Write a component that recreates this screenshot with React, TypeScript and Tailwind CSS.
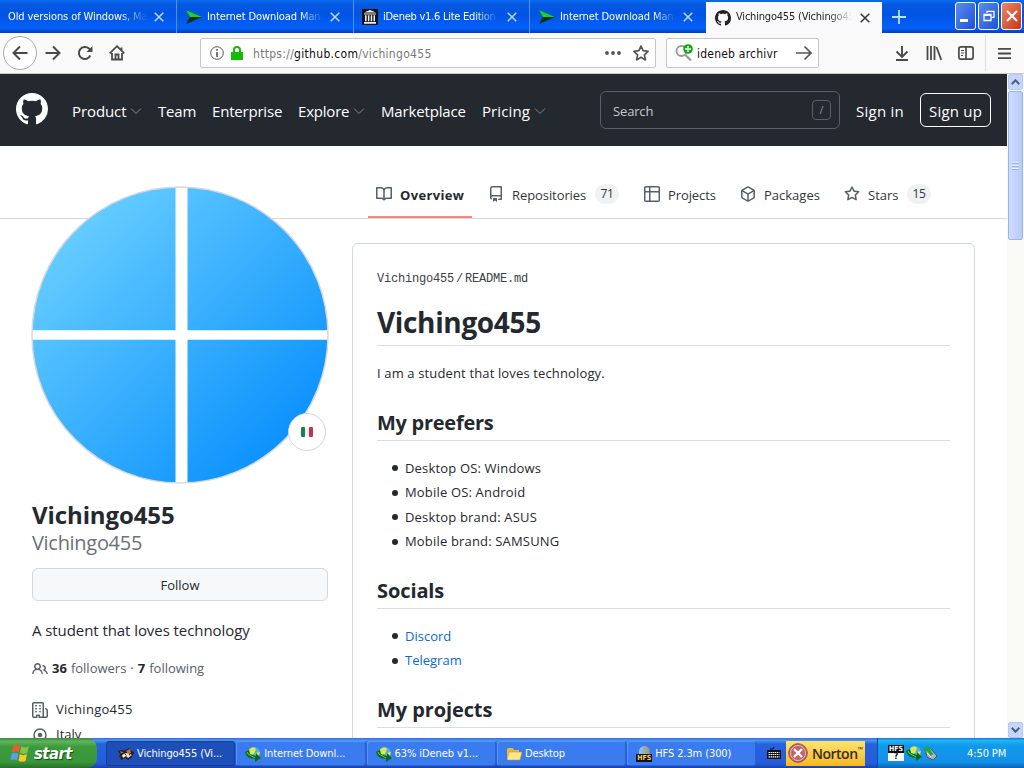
import React from 'react';

const paths = {
  github:
    'M8 0C3.58 0 0 3.58 0 8c0 3.54 2.29 6.53 5.47 7.59.4.07.55-.17.55-.38 0-.19-.01-.82-.01-1.49-2.01.37-2.53-.49-2.69-.94-.09-.23-.48-.94-.82-1.13-.28-.15-.68-.52-.01-.53.63-.01 1.08.58 1.23.82.72 1.21 1.87.87 2.33.66.07-.52.28-.87.51-1.07-1.78-.2-3.64-.89-3.64-3.95 0-.87.31-1.59.82-2.15-.08-.2-.36-1.02.08-2.12 0 0 .67-.21 2.2.82.64-.18 1.32-.27 2-.27.68 0 1.36.09 2 .27 1.53-1.04 2.2-.82 2.2-.82.44 1.1.16 1.92.08 2.12.51.56.82 1.27.82 2.15 0 3.07-1.87 3.75-3.65 3.95.29.25.54.73.54 1.48 0 1.07-.01 1.93-.01 2.2 0 .21.15.46.55.38A8.013 8.013 0 0016 8c0-4.42-3.58-8-8-8z',
  book: 'M0 1.75A.75.75 0 01.75 1h4.253c1.227 0 2.317.59 3 1.501A3.744 3.744 0 0111.006 1h4.245a.75.75 0 01.75.75v10.5a.75.75 0 01-.75.75h-4.507a2.25 2.25 0 00-1.591.659l-.622.621a.75.75 0 01-1.06 0l-.622-.621A2.25 2.25 0 005.258 13H.75a.75.75 0 01-.75-.75V1.75zm8.755 3a2.25 2.25 0 012.25-2.25H14.5v9h-3.757c-.71 0-1.4.201-1.992.572l.004-7.322zm-1.504 7.324l.004-5.073-.002-2.253A2.25 2.25 0 005.003 2.5H1.5v9h3.757a3.75 3.75 0 011.994.574z',
  repo: 'M2 2.5A2.5 2.5 0 014.5 0h8.75a.75.75 0 01.75.75v12.5a.75.75 0 01-.75.75h-2.5a.75.75 0 110-1.5h1.75v-2h-8a1 1 0 00-.714 1.7.75.75 0 01-1.072 1.05A2.495 2.495 0 012 11.5v-9zm10.5-1V9h-8c-.356 0-.694.074-1 .208V2.5a1 1 0 011-1h8zM5 12.25v3.25a.25.25 0 00.4.2l1.45-1.087a.25.25 0 01.3 0L8.6 15.7a.25.25 0 00.4-.2v-3.25a.25.25 0 00-.25-.25h-3.5a.25.25 0 00-.25.25z',
  table:
    'M0 1.75C0 .784.784 0 1.75 0h12.5C15.216 0 16 .784 16 1.75v12.5A1.75 1.75 0 0114.25 16H1.75A1.75 1.75 0 010 14.25V1.75zM1.5 6.5v7.75c0 .138.112.25.25.25H5v-8H1.5zM6.5 6.5v8h7.75a.25.25 0 00.25-.25V6.5h-8zM14.5 5V1.75a.25.25 0 00-.25-.25H6.5V5h8zM5 5V1.5H1.75a.25.25 0 00-.25.25V5H5z',
  package:
    'M8.878.392a1.75 1.75 0 00-1.756 0l-5.25 3.045A1.75 1.75 0 001 4.951v6.098c0 .624.332 1.2.872 1.514l5.25 3.045a1.75 1.75 0 001.756 0l5.25-3.045c.54-.313.872-.89.872-1.514V4.951c0-.624-.332-1.2-.872-1.514L8.878.392zM7.875 1.69a.25.25 0 01.25 0l4.63 2.685L8 7.133 3.245 4.375l4.63-2.685zM2.5 5.677v5.372c0 .09.047.171.125.216l4.625 2.683V8.432L2.5 5.677zm6.25 8.271l4.625-2.683a.25.25 0 00.125-.216V5.677L8.75 8.432v5.516z',
  star: 'M8 .25a.75.75 0 01.673.418l1.882 3.815 4.21.612a.75.75 0 01.416 1.279l-3.046 2.97.719 4.192a.75.75 0 01-1.088.791L8 12.347l-3.766 1.98a.75.75 0 01-1.088-.79l.72-4.194L.818 6.374a.75.75 0 01.416-1.28l4.21-.611L7.327.668A.75.75 0 018 .25zm0 2.445L6.615 5.5a.75.75 0 01-.564.41l-3.097.45 2.24 2.184a.75.75 0 01.216.664l-.528 3.084 2.769-1.456a.75.75 0 01.698 0l2.77 1.456-.53-3.084a.75.75 0 01.216-.664l2.24-2.183-3.096-.45a.75.75 0 01-.564-.41L8 2.694v.001z',
  people:
    'M5.5 3.5a2 2 0 100 4 2 2 0 000-4zM2 5.5a3.5 3.5 0 115.898 2.549 5.507 5.507 0 013.034 4.084.75.75 0 11-1.482.235 4.001 4.001 0 00-7.9 0 .75.75 0 01-1.482-.236A5.507 5.507 0 013.102 8.05 3.49 3.49 0 012 5.5zM11 4a.75.75 0 100 1.5 1.5 1.5 0 01.666 2.844.75.75 0 00-.416.672v.352a.75.75 0 00.574.73c1.2.289 2.162 1.2 2.522 2.372a.75.75 0 101.434-.44 5.01 5.01 0 00-2.56-3.012A3 3 0 0011 4z',
  organization:
    'M1.5 14.25c0 .138.112.25.25.25H4v-1.25a.75.75 0 01.75-.75h2.5a.75.75 0 01.75.75v1.25h2.25a.25.25 0 00.25-.25V1.75a.25.25 0 00-.25-.25h-8.5a.25.25 0 00-.25.25v12.5zM1.75 16A1.75 1.75 0 010 14.25V1.75C0 .784.784 0 1.75 0h8.5C11.216 0 12 .784 12 1.75v12.5c0 .085-.006.168-.018.25h2.268a.25.25 0 00.25-.25V8.285a.25.25 0 00-.111-.208l-1.055-.703a.75.75 0 11.832-1.248l1.055.703c.487.325.779.871.779 1.456v5.965A1.75 1.75 0 0114.25 16h-3.5a.75.75 0 01-.197-.026c-.099.017-.2.026-.303.026h-3a.75.75 0 01-.75-.75V14h-1v1.25a.75.75 0 01-.75.75h-3zM3 3.75A.75.75 0 013.75 3h.5a.75.75 0 010 1.5h-.5A.75.75 0 013 3.75zM3.75 6a.75.75 0 000 1.5h.5a.75.75 0 000-1.5h-.5zM3 9.75A.75.75 0 013.75 9h.5a.75.75 0 010 1.5h-.5A.75.75 0 013 9.75zM7.75 9a.75.75 0 000 1.5h.5a.75.75 0 000-1.5h-.5zM7 6.75A.75.75 0 017.75 6h.5a.75.75 0 010 1.5h-.5A.75.75 0 017 6.75zM7.75 3a.75.75 0 000 1.5h.5a.75.75 0 000-1.5h-.5z',
};

const Octicon = ({ name, className = 'w-4 h-4' }: { name: keyof typeof paths; className?: string }) => (
  <svg viewBox="0 0 16 16" fill="currentColor" fillRule="evenodd" className={`shrink-0 ${className}`}>
    <path d={paths[name]} />
  </svg>
);

const CloseX = ({ className }: { className: string }) => (
  <svg viewBox="0 0 10 10" className={`w-[10px] h-[10px] shrink-0 ${className}`} fill="none" stroke="currentColor" strokeWidth="1.5">
    <path d="M.7.7l8.6 8.6M9.3.7L.7 9.3" />
  </svg>
);

const PlayIcon = () => (
  <svg viewBox="0 0 16 16" className="w-4 h-4 shrink-0">
    <path d="M0 1l16 7L0 15l4-7z" fill="#06300f" />
    <path d="M0 1l16 7H4z" fill="#19d52a" />
  </svg>
);

const ArchiveIcon = () => (
  <svg viewBox="0 0 16 16" className="w-4 h-4 shrink-0">
    <path d="M0 0h16v16H0z" fill="#111" />
    <path d="M8 1l6 2.6H2zM2 4.4h12v1H2zM3 6.2h1.6v6H3zM5.9 6.2h1.5v6H5.9zM8.7 6.2h1.5v6H8.7zM11.5 6.2H13v6h-1.5zM2 13h12v1.7H2z" fill="#eee" />
  </svg>
);

const fade = '[mask-image:linear-gradient(to_right,#000_80%,transparent)]';

const BrowserTabs = () => (
  <div className="flex h-[33px] bg-[linear-gradient(to_bottom,#0a6cf0_0%,#0558e0_14%,#0054e3_45%,#0561fb_85%,#0046c4_97%)] text-white text-[11px] font-medium">
    <div className="flex items-center w-[177px] pl-2 pt-px border-r border-[#4c93f8]">
      <span className={`w-[140px] mr-[6px] whitespace-nowrap overflow-hidden tracking-[-0.1px] ${fade}`}>Old versions of Windows, Mac</span>
      <CloseX className="text-[#b9dcff]" />
    </div>
    <div className="flex items-center w-[177px] pl-[9px] pt-px border-r border-[#4c93f8]">
      <PlayIcon />
      <span className={`w-[116px] ml-[5px] mr-[7px] whitespace-nowrap overflow-hidden tracking-[-0.1px] ${fade}`}>Internet Download Manager</span>
      <CloseX className="text-[#b9dcff]" />
    </div>
    <div className="flex items-center w-[176px] pl-[8px] pt-px border-r border-[#4c93f8]">
      <ArchiveIcon />
      <span className={`w-[116px] ml-[5px] mr-[8px] whitespace-nowrap overflow-hidden tracking-[-0.25px] ${fade}`}>iDeneb v1.6 Lite Edition</span>
      <CloseX className="text-[#b9dcff]" />
    </div>
    <div className="flex items-center w-[176px] pl-[9px] pt-px">
      <PlayIcon />
      <span className={`w-[116px] ml-[5px] mr-[7px] whitespace-nowrap overflow-hidden tracking-[-0.1px] ${fade}`}>Internet Download Manager</span>
      <CloseX className="text-[#b9dcff]" />
    </div>
    <div className="flex items-center w-[176px] pl-[9px] mt-[2px] bg-[#f9f9fb] text-[#222]">
      <Octicon name="github" />
      <span className={`w-[116px] ml-[5px] mr-[8px] whitespace-nowrap overflow-hidden tracking-[-0.2px] ${fade}`}>Vichingo455 (Vichingo455)</span>
      <CloseX className="text-[#333]" />
    </div>
    <div className="flex items-center justify-center w-[34px]">
      <svg viewBox="0 0 14 14" className="w-[14px] h-[14px]" stroke="#b9e0ff" strokeWidth="1.8"><path d="M7 0v14M0 7h14" /></svg>
    </div>
    <div className="flex gap-[2px] pt-[2px] pl-[39px]">
      <div className="w-[21px] h-[28px] rounded-[3px] border border-white bg-linear-to-br from-[#5b8cf0] to-[#1c4fd6] flex items-end pl-1 pb-[7px]">
        <div className="w-[8px] h-[3px] bg-white" />
      </div>
      <div className="w-[21px] h-[28px] rounded-[3px] border border-white bg-linear-to-br from-[#5b8cf0] to-[#1c4fd6] flex items-center justify-center">
        <svg viewBox="0 0 12 12" className="w-3 h-3" fill="none" stroke="#fff" strokeWidth="1.3"><path d="M4 3V1.3h7v6H8.5" /><path d="M1 4.500h7v6H1zM1 5.3h7" /></svg>
      </div>
      <div className="w-[21px] h-[28px] rounded-[3px] border border-white bg-linear-to-br from-[#ee8567] to-[#c7310f] flex items-center justify-center">
        <svg viewBox="0 0 12 12" className="w-3 h-3" stroke="#fff" strokeWidth="2"><path d="M1 1l10 10M11 1L1 11" /></svg>
      </div>
    </div>
  </div>
);

const Toolbar = () => (
  <div className="flex items-center h-[41px] bg-[#f9f9fa] text-[#4a4a4a] border-b border-[#ccc]">
    <div className="flex items-center justify-center w-[34px] h-[34px] ml-[3px] rounded-full border border-[#aaa] bg-white">
      <svg viewBox="0 0 16 16" className="w-4 h-4" fill="none" stroke="currentColor" strokeWidth="2"><path d="M15.5 8h-14M8 1.5L1.5 8 8 14.5" /></svg>
    </div>
    <svg viewBox="0 0 16 16" className="w-4 h-4 ml-2" fill="none" stroke="currentColor" strokeWidth="2"><path d="M.5 8h14M8 1.5L14.5 8 8 14.5" /></svg>
    <svg viewBox="0 0 16 16" className="w-4 h-4 ml-4" fill="none" stroke="currentColor" strokeWidth="2"><path d="M13.3 10.5A6 6 0 1 1 12 3.6l1.6 1.5" /><path d="M15.5 1v6h-6z" fill="currentColor" stroke="none" /></svg>
    <svg viewBox="0 0 16 16" className="w-4 h-4 ml-4" fill="none" stroke="currentColor" strokeWidth="1.8"><path d="M.7 8.3L8 1.2l7.3 7.1M12.5 2.5v3M3 8v6.5h10V8" /><path d="M6.5 15V9.5h3V15" /></svg>
    <div className="flex items-center w-[456px] h-[30px] ml-[75px] pl-[9px] rounded-[2px] border border-[#c6c6c8] bg-white">
      <svg viewBox="0 0 14 14" className="w-[14px] h-[14px]" fill="none" stroke="#555"><circle cx="7" cy="7" r="6.3" /><path d="M7 6v5M7 3v1.8" strokeWidth="1.6" /></svg>
      <svg viewBox="0 0 12 14" className="w-3 h-[14px] ml-[7px]"><path d="M3 6V4a3 3 0 016 0v2" fill="none" stroke="#12bc00" strokeWidth="2" /><path d="M0 6h12v8H0z" fill="#12bc00" /></svg>
      <span className="w-[350px] ml-[10px] pt-px text-[12px] text-[#777] tracking-[0.3px]">https://<span className="text-[#0c0c0d]">github.com</span>/vichingo455</span>
      <svg viewBox="0 0 16 4" className="w-4 h-1 ml-[2px]" fill="#555"><circle cx="2" cy="2" r="1.9" /><circle cx="8" cy="2" r="1.9" /><circle cx="14" cy="2" r="1.9" /></svg>
      <svg viewBox="0 0 16 16" className="w-4 h-4 ml-3" fill="none" stroke="#555" strokeWidth="1.7" strokeLinejoin="round"><path d="M8 1l2.1 4.7 5 .6-3.7 3.5 1 5.1L8 12.3l-4.4 2.6 1-5.1L.9 6.3l5-.6z" /></svg>
    </div>
    <div className="flex items-center w-[153px] h-[30px] ml-[10px] pl-[8px] rounded-[2px] border border-[#c6c6c8] bg-white">
      <svg viewBox="0 0 18 18" className="w-[18px] h-[18px]"><circle cx="6.5" cy="7" r="5" fill="none" stroke="#999" strokeWidth="1.8" /><path d="M10 10.5l6 6" stroke="#999" strokeWidth="2.2" /><circle cx="13" cy="5" r="4.8" fill="#12a810" /><path d="M13 2v6M10 5h6" stroke="#fff" strokeWidth="1.4" /></svg>
      <span className="w-[96px] ml-1 pt-px text-[12px] text-[#111] tracking-[0.22px]">ideneb archivr</span>
      <svg viewBox="0 0 16 16" className="w-4 h-4 ml-[3px]" fill="none" stroke="#555" strokeWidth="1.7"><path d="M0 8h15M8.5 1.5L15 8l-6.5 6.5" /></svg>
    </div>
    <svg viewBox="0 0 16 16" className="w-4 h-4 ml-[75px]" fill="none" stroke="currentColor" strokeWidth="1.9"><path d="M8 1v10M2.5 6.5L8 12l5.5-5.5M2 15h12" /></svg>
    <svg viewBox="0 0 16 16" className="w-4 h-4 ml-4" fill="none" stroke="currentColor" strokeWidth="1.8"><path d="M1.5 1v14M5 1v14M8.5 1v14M10.5 2l4.8 13" /></svg>
    <svg viewBox="0 0 16 16" className="w-4 h-4 ml-4" fill="none" stroke="currentColor" strokeWidth="1.7"><rect x=".9" y="1.9" width="14.2" height="12.2" rx="2" /><path d="M8 2v12" /><path d="M3 5.500h3M3 8h3M3 10.500h2" strokeWidth="1" /></svg>
    <div className="w-px h-[36px] ml-[11px] bg-[#ddd]" />
    <svg viewBox="0 0 14 14" className="w-[13px] h-[13px] ml-[12px]" stroke="currentColor" strokeWidth="2"><path d="M0 2h14M0 7h14M0 12h14" /></svg>
  </div>
);

const Chevron = () => (
  <svg viewBox="0 0 12 8" className="w-3 h-2 ml-1" fill="none" stroke="#85888e"><path d="M1 1.5l5 5 5-5" /></svg>
);

const SiteHeader = () => (
  <header className="flex items-center h-[72px] pl-4 bg-[#24282f] text-white text-[15px] whitespace-nowrap">
    <Octicon name="github" className="w-8 h-8 -mt-[2px]" />
    <nav className="flex items-center w-[528px] ml-6 pt-[2px]">
      <span className="flex items-center w-[86px] tracking-[-0.1px]">Product<Chevron /></span>
      <span className="w-[54px] tracking-[-0.2px]">Team</span>
      <span className="w-[86px] tracking-[-0.2px]">Enterprise</span>
      <span className="flex items-center w-[83px] tracking-[-0.2px]">Explore<Chevron /></span>
      <span className="w-[101px] tracking-[-0.15px]">Marketplace</span>
      <span className="flex items-center tracking-[0.1px]">Pricing<Chevron /></span>
    </nav>
    <div className="flex items-center justify-between w-[240px] h-[38px] pl-3 pr-2 rounded-md border border-[#57606a] text-[13px] text-[#c5c8cc]">
      <span className="pt-[3px] tracking-[-0.15px]">Search</span>
      <span className="flex items-center justify-center w-[19px] h-5 rounded border border-[#57606a] text-[11px] text-[#8b929a]">/</span>
    </div>
    <span className="w-[48px] ml-4 pt-[2px] tracking-[0.25px]">Sign in</span>
    <span className="flex items-center justify-center w-[71px] h-[34px] ml-4 pt-[2px] rounded-md border border-white tracking-[0.2px]">Sign up</span>
  </header>
);

const Counter = ({ children }: { children: React.ReactNode }) => (
  <span className="flex items-center justify-center h-5 w-6 pt-px rounded-full bg-[#eff1f2] text-[12px] tracking-[-0.4px]">{children}</span>
);

const ProfileNav = () => (
  <div className="flex gap-2 h-[73px] pt-[25px] pl-[368px] border-b border-[#d6d9dc] text-[13px] text-[#33373c] whitespace-nowrap">
    <div className="flex items-center gap-2 w-[104px] pl-2 border-b-2 border-[#f08c80] text-[#24292f]">
      <Octicon name="book" className="w-4 h-4 text-[#57606a]" /><span className="pt-[4px] font-bold tracking-[0.35px]">Overview</span>
    </div>
    <div className="flex items-center gap-2 w-[148px] pl-2 pb-[2px]">
      <Octicon name="repo" className="w-4 h-4 text-[#57606a]" /><span className="w-[75px] pt-[4px] tracking-[-0.08px]">Repositories</span><Counter>71</Counter>
    </div>
    <div className="flex items-center gap-2 w-[88px] pl-2 pb-[2px]">
      <Octicon name="table" className="w-4 h-4 text-[#57606a]" /><span className="pt-[4px] tracking-[-0.1px]">Projects</span>
    </div>
    <div className="flex items-center gap-2 w-[96px] pl-2 pb-[2px]">
      <Octicon name="package" className="w-4 h-4 text-[#57606a]" /><span className="pt-[4px]">Packages</span>
    </div>
    <div className="flex items-center gap-2 pl-2 pb-[2px]">
      <Octicon name="star" className="w-4 h-4 text-[#57606a]" /><span className="w-[31px] pt-[4px]">Stars</span><Counter>15</Counter>
    </div>
  </div>
);

const Sidebar = () => (
  <aside className="w-[296px] ml-8 -mt-[33px] shrink-0 text-[#24292f]">
    <div className="relative w-[298px] h-[298px] -ml-px">
      <svg viewBox="0 0 298 298" className="w-full h-full">
        <defs>
          <linearGradient id="pane" gradientUnits="userSpaceOnUse" x1="40" y1="40" x2="255" y2="255">
            <stop offset="0" stopColor="#66cdff" />
            <stop offset="1" stopColor="#0c92fd" />
          </linearGradient>
        </defs>
        <circle cx="149" cy="149" r="148" fill="url(#pane)" />
        <path d="M144.5 1h12v296h-12zM1 144.2h296v9.6H1z" fill="#fff" />
        <circle cx="149" cy="149" r="148" fill="none" stroke="#d3d9de" strokeWidth="1.5" />
      </svg>
      <div className="absolute left-[257px] top-[227px] flex items-center justify-center w-[38px] h-[38px] rounded-full border border-[#d0d7de] bg-white">
        <svg viewBox="0 0 12 10" className="w-3 h-[10px]"><rect width="4" height="10" rx="1" fill="#1b8050" /><path d="M4 0h4v10H4z" fill="#f3f3f3" /><rect x="8" width="4" height="10" rx="1" fill="#bf3350" /></svg>
      </div>
    </div>
    <h1 className="mt-[16px] text-[24px] leading-[30px] font-bold tracking-[-0.1px]">Vichingo455</h1>
    <p className="pt-px mb-px text-[20px] leading-[24px] text-[#6a7178] tracking-[-0.3px]">Vichingo455</p>
    <div className="flex items-center justify-center h-[33px] mt-[13px] pt-[2px] rounded-md border border-[#d5d8da] bg-[#f6f8fa] text-[13px]">Follow</div>
    <p className="mt-[17px] text-[15px] leading-6 tracking-[-0.07px]">A student that loves technology</p>
    <div className="flex items-center h-5 mt-[17px] text-[13px] text-[#57606a] whitespace-nowrap">
      <Octicon name="people" className="w-4 h-4 mr-1" />
      <b className="text-[#24292f] mr-1">36</b>followers<span className="mx-1">·</span><b className="text-[#24292f] mr-1">7</b>following
    </div>
    <div className="flex items-center h-6 mt-[19px] gap-2 text-[13px] tracking-[0.28px]">
      <Octicon name="organization" className="w-4 h-4 text-[#57606a]" />Vichingo455
    </div>
    <div className="flex items-center h-6 mt-px gap-2 text-[13px]">
      <svg viewBox="0 0 16 16" className="w-4 h-4" fill="none" stroke="#57606a" strokeWidth="1.5"><circle cx="8" cy="8" r="6" /><circle cx="8" cy="8" r="1.5" fill="#57606a" /></svg>Italy
    </div>
  </aside>
);

const List = ({ items, link = false }: { items: string[]; link?: boolean }) => (
  <ul className="pt-[15px] pb-px text-[13px]">
    {items.map((item) => (
      <li key={item} className="flex items-center h-[24.5px] pl-[15px]">
        <span className="w-[6px] h-[6px] mr-[7px] rounded-full bg-[#24292f]" />
        <span className={link ? 'text-[#0969da]' : 'tracking-[0.17px]'}>{item}</span>
      </li>
    ))}
  </ul>
);

const Readme = () => (
  <article className="w-[623px] h-[560px] ml-6 mt-6 px-6 pt-6 rounded-md border border-[#d0d7de] text-[#24292f]">
    <p className="pt-px font-['Liberation_Mono',monospace] text-[12px] leading-5 text-[#3c4147] tracking-[-0.2px]">Vichingo455<span className="mx-[2px]">/</span>README.md</p>
    <h1 className="mt-[12px] h-[45px] text-[28px] leading-[42px] font-bold tracking-[-0.35px] border-b border-[#d8dee4]">Vichingo455</h1>
    <p className="mt-[17px] text-[13px] leading-5 tracking-[0.14px]">I am a student that loves technology.</p>
    <h2 className="mt-[22px] h-[36px] text-[20px] leading-[35px] font-bold tracking-[-0.27px] border-b border-[#d8dee4]">My preefers</h2>
    <List items={['Desktop OS: Windows', 'Mobile OS: Android', 'Desktop brand: ASUS', 'Mobile brand: SAMSUNG']} />
    <h2 className="mt-[18px] h-[36px] text-[20px] leading-[35px] font-bold tracking-[-0.1px] border-b border-[#d8dee4]">Socials</h2>
    <List items={['Discord', 'Telegram']} link />
    <h2 className="mt-[18px] h-[36px] text-[20px] leading-[35px] font-bold tracking-[-0.1px] border-b border-[#d8dee4]">My projects</h2>
  </article>
);

const ScrollArrow = ({ d }: { d: string }) => (
  <div className="flex items-center justify-center w-[15px] h-[16px] ml-px rounded-[2px] border border-[#b4c8f6] bg-[#c6d6fd]">
    <svg viewBox="0 0 9 6" className="w-[9px] h-[6px]" fill="none" stroke="#4d6185" strokeWidth="2"><path d={d} /></svg>
  </div>
);

const Scrollbar = () => (
  <div className="flex flex-col w-[17px] bg-[#f9f9f5]">
    <ScrollArrow d="M.7 5.2l3.8-4 3.8 4" />
    <div className="flex flex-col items-center justify-center gap-px w-[15px] h-[149px] ml-px mt-px rounded-[2px] border border-[#98b4e8] bg-linear-to-r from-[#cfdcfe] to-[#b9cafa]">
      {[0, 1, 2].map((n) => (
        <div key={n} className="w-[7px] h-px bg-[#eef4fe] border-b border-[#8cb0f8] box-content" />
      ))}
    </div>
    <div className="flex-1" />
    <ScrollArrow d="M.7.8l3.8 4 3.8-4" />
  </div>
);

const GlobeIcon = () => (
  <svg viewBox="0 0 16 16" className="w-4 h-4 shrink-0">
    <circle cx="9" cy="7" r="6" fill="#5cabe6" />
    <path d="M4 4c2-3 5-3 7-1l-2 5-4 1zM11 7l4-1-2 5z" fill="#dceb4a" />
    <path d="M0 6l4-2 1 4 6 2v-3l5 5-6 4v-3C4 13 1 10 0 6z" fill="#0a6a1b" />
    <path d="M2 6l1 2 7 4" stroke="#5dda45" fill="none" />
  </svg>
);

const FoxIcon = () => (
  <svg viewBox="0 0 16 16" className="w-4 h-4 shrink-0">
    <path d="M0 5l4-1 2 1 5-3 1 2 4 2-2 5-4 3-3-2-4 2-1-2 2-2-3 1 1-3z" fill="#231c18" />
    <path d="M2 5l4 1.5-3 1zM8 5l4-2 1 4-3 1z" fill="#c5742f" />
    <path d="M4 9l4-2 4 1 2 1-4 3-2-2-3 2z" fill="#f3e9dc" />
    <path d="M7 8l1.5 1.5M11 8l1 1.5" stroke="#111" />
  </svg>
);

const FolderIcon = () => (
  <svg viewBox="0 0 16 16" className="w-4 h-4 shrink-0">
    <path d="M1 3l1-1h5l1 2h5v9H1z" fill="#e7b93f" />
    <path d="M3 6h13l-2 8H1z" fill="#ffe88a" stroke="#c79325" strokeWidth=".6" />
  </svg>
);

const HfsIcon = () => (
  <div className="flex flex-col items-center w-4 h-4 shrink-0">
    <div className="w-[11px] h-[8px] rounded-t-full bg-linear-to-r from-[#8fc6ef] to-[#9c8f7c]" />
    <div className="w-4 h-[8px] bg-[#111] text-[#ffd26c] text-[7px] leading-[8px] font-bold text-center">HFS</div>
  </div>
);

const taskButtons = [
  { label: 'Vichingo455 (Vi...', icon: <FoxIcon />, active: true },
  { label: 'Internet Downl...', icon: <GlobeIcon /> },
  { label: '63% iDeneb v1...', icon: <GlobeIcon /> },
  { label: 'Desktop', icon: <FolderIcon /> },
  { label: 'HFS 2.3m (300)', icon: <HfsIcon /> },
];

const Taskbar = () => (
  <footer className="flex h-[30px] bg-[linear-gradient(to_bottom,#2f6fe0_0%,#4b92f6_8%,#2762dd_20%,#245bdc_85%,#1941a5_100%)] text-white text-[11px] whitespace-nowrap">
    <div className="flex items-center w-[97px] pl-[10px] rounded-r-[10px] bg-[linear-gradient(to_bottom,#3c8a3c_0%,#5fb35e_12%,#3c9a3b_30%,#3a963a_80%,#27702a_100%)]">
      <svg viewBox="0 0 18 18" className="w-5 h-5">
        <path d="M3 2.5q3-2 6 0L7.8 8.5Q5 7 1.7 8.5z" fill="#ef5a2a" />
        <path d="M10 3q3 2 7 0l-1.5 6q-3 1.5-6.5 0z" fill="#86c440" />
        <path d="M1.5 9.5q3-1.5 6 0l-1.2 6q-3-1.5-6 0z" fill="#5b9bf0" />
        <path d="M8.8 10.2q3 1.5 6.5 0l-1.3 6q-3 1.5-6.4 0z" fill="#fbc72b" />
      </svg>
      <span className="ml-[4px] pt-px text-[16.5px] leading-5 font-bold italic tracking-[-0.5px] [text-shadow:1px_1px_1px_#1c4d1c]">start</span>
    </div>
    <div className="flex items-center gap-px w-[664px] pl-[9px]">
      {taskButtons.map((b) => (
        <div
          key={b.label}
          className={`flex items-center w-[129.3px] h-[25px] pt-px rounded-[3px] border ${
            b.active ? 'bg-[#1e4fb8] border-[#173e96] pl-[11px]' : 'bg-[#3b7bf0] border-t-[#5a97fa] border-l-[#5a97fa] border-r-[#2a62d0] border-b-[#2a62d0] pl-[8px]'
          }`}
        >
          {b.icon}
          <span className="ml-[3px] pt-px tracking-[-0.1px]">{b.label}</span>
        </div>
      ))}
    </div>
    <div className="flex items-center w-[116px] pl-[6px]">
      <svg viewBox="0 0 14 12" className="w-[14px] h-3"><path d="M3 2h3l1-2" stroke="#111" fill="none" /><path d="M0 3h14v9H0z" fill="#111" /><path d="M1.5 5.5h11M1.5 7.5h11M1.5 9.8h11" stroke="#fff" strokeWidth="1.2" strokeDasharray="1.5 .6" /></svg>
      <div className="flex items-center w-[79px] h-[25px] ml-[5px] pl-[2px] bg-linear-to-b from-[#ffe36b] to-[#f5b915]">
        <svg viewBox="0 0 20 20" className="w-5 h-5 shrink-0"><circle cx="10" cy="10" r="9.3" fill="#c4626a" stroke="#8f5358" /><circle cx="10" cy="10" r="7.5" fill="none" stroke="#e7babb" /><path d="M6 6l8 8M14 6l-8 8" stroke="#fff" strokeWidth="2.4" /></svg>
        <span className="flex ml-[4px] pt-px font-['Open_Sans',sans-serif] text-[14px] leading-5 font-semibold text-[#332c22] tracking-[-0.5px]">Norton<span className="text-[7px] leading-[12px]">™</span></span>
      </div>
    </div>
    <div className="flex items-center flex-1 pl-[10px] border-l border-[#0c4aa8] bg-[linear-gradient(to_bottom,#1478d8_0%,#20b4f5_8%,#129aec_25%,#1290e8_80%,#0e62b4_100%)]">
      <div className="w-4 h-4 bg-white text-black text-center text-[8px] leading-[8px] font-bold">
        <div className="h-[8px] bg-[#111] text-white text-[7px]">HFS</div>?
      </div>
      <div className="w-[18px] pl-[2px]"><GlobeIcon /></div>
      <svg viewBox="0 0 16 16" className="w-4 h-4 ml-px"><path d="M2 4l5-1 7 8-4 4-6-3z" fill="#a9b6bd" stroke="#4b5a63" /><path d="M4 8l4 4" stroke="#eef" /><path d="M2 1l7 2-2 1 3 5-2 2-4-5-2 2z" fill="#23a936" /></svg>
      <span className="ml-[28px] pt-[2px] tracking-[-0.1px]">4:50 PM</span>
    </div>
  </footer>
);

const App = () => {
  return (
    <div className="flex flex-col w-[1024px] h-[768px] overflow-hidden bg-white font-['DejaVu_Sans_Condensed','Noto_Sans',sans-serif]">
      <BrowserTabs />
      <Toolbar />
      <div className="flex flex-1 min-h-0">
        <main className="w-[1007px] overflow-hidden font-['Open_Sans','Noto_Sans',sans-serif]">
          <SiteHeader />
          <ProfileNav />
          <div className="flex">
            <Sidebar />
            <Readme />
          </div>
        </main>
        <Scrollbar />
      </div>
      <Taskbar />
    </div>
  );
}

export default App;
